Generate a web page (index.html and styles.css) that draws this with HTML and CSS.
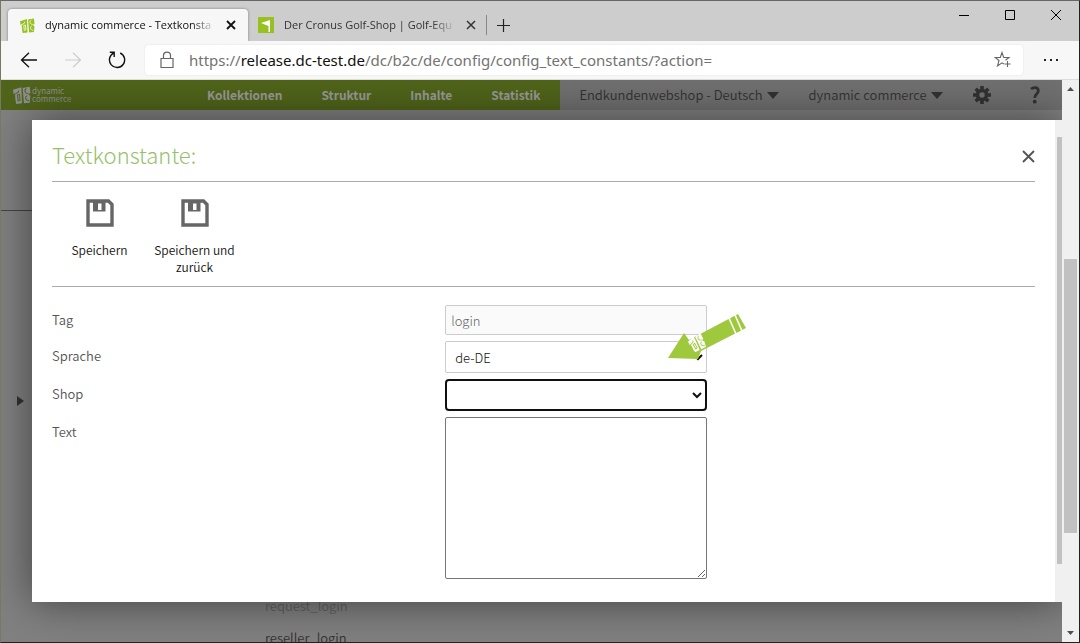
FILE: index.html
```html
<!DOCTYPE html>
<html lang="de">
<head>
<meta charset="utf-8">
<title>dynamic commerce - Textkonstante</title>
<link rel="stylesheet" href="styles.css">
</head>
<body>
<svg class="defs" width="0" height="0" aria-hidden="true">
  <symbol id="dc" viewBox="0 0 28 28">
    <path fill="currentColor" d="M0 6 13 2 14 27 5 28 4 23 3 12 1 13zM15 3 26 1 27 11 24 13 27 16 26 26 17 27z"/>
    <path fill="none" stroke="var(--cut)" stroke-width="1.600" d="M2 13 8 10 9 7M7 14 10 13 11 22 8 23zM21 4C17 6 18 12 24 12M22 15C18 17 19 23 25 23"/>
  </symbol>
  <symbol id="disk" viewBox="0 0 28 28">
    <path fill="none" stroke="#666" stroke-width="3.4" d="M2 2H22.500L26 5.500V26H2z"/>
    <path fill="#666" fill-rule="evenodd" d="M7 2H19.500V12.500H7zM12 4.500V11H15.500V4.500z"/>
  </symbol>
</svg>
<header class="titlebar">
  <div class="tab tab-active">
    <svg class="favicon" width="15" height="15"><use href="#dc"/></svg>
    <span class="tab-title">dynamic commerce - Textkonsta</span>
    <button class="icon-button" aria-label="Tab schließen"><svg width="10" height="10" viewBox="0 0 10 10"><path d="M1 1 9 9M9 1 1 9" stroke="#111" stroke-width="1.800"/></svg></button>
  </div>
  <div class="tab">
    <svg class="favicon" width="16" height="16" viewBox="0 0 16 16"><path fill="#97c11f" d="M0 0H16V16H0z"/><path fill="#fff" d="M3 6 12 3V15H10.500V9z"/></svg>
    <span class="tab-title">Der Cronus Golf-Shop | Golf-Equ</span>
    <button class="icon-button" aria-label="Tab schließen"><svg width="10" height="10" viewBox="0 0 10 10"><path d="M1 1 9 9M9 1 1 9" stroke="#333" stroke-width="1.500"/></svg></button>
  </div>
  <button class="icon-button new-tab" aria-label="Neuer Tab"><svg width="13" height="13" viewBox="0 0 13 13"><path d="M6.500 0V13M0 6.500H13" stroke="#222" stroke-width="1.200"/></svg></button>
  <div class="window-buttons">
    <button class="icon-button" aria-label="Minimieren"><svg width="10" height="10" viewBox="0 0 10 10"><path d="M0 5.500H10" stroke="#000"/></svg></button>
    <button class="icon-button" aria-label="Maximieren"><svg width="10" height="10" viewBox="0 0 10 10"><path d="M.5.5H9.500V9.500H.5z" fill="none" stroke="#000"/></svg></button>
    <button class="icon-button" aria-label="Schließen"><svg width="10" height="10" viewBox="0 0 10 10"><path d="M0 0 10 10M10 0 0 10" stroke="#000"/></svg></button>
  </div>
</header>
<nav class="toolbar">
  <button class="icon-button tool" aria-label="Zurück"><svg width="18" height="16" viewBox="0 0 18 16"><path d="M17 8H1.500M9 .8 1.500 8 9 15.200" fill="none" stroke="#111" stroke-width="1.300"/></svg></button>
  <button class="icon-button tool" aria-label="Vorwärts"><svg width="18" height="16" viewBox="0 0 18 16"><path d="M1 8H16.500M9 .8 16.500 8 9 15.200" fill="none" stroke="#ccc" stroke-width="1.200"/></svg></button>
  <button class="icon-button tool" aria-label="Neu laden"><svg width="18" height="18" viewBox="0 0 18 18"><path d="M12.200 2A7.600 7.600 0 1 1 5.500 2.200M1.800 1.200H6.200V6" fill="none" stroke="#111" stroke-width="1.400"/></svg></button>
  <div class="address">
    <svg width="14" height="18" viewBox="0 0 14 18"><path d="M1 7.500H13V16.500H1zM3.500 7.500V4.500C3.500 0 10.500 0 10.500 4.500V7.500" fill="none" stroke="#666" stroke-width="1.200"/></svg>
    <span class="url">https://<b>release.dc-test.de</b>/dc/b2c/de/config/config_text_constants/?action=</span>
    <button class="icon-button" aria-label="Zu Favoriten hinzufügen"><svg width="18" height="18" viewBox="0 0 18 18"><path d="M10 13 8 11.800 3.500 15 5 9.500 1.200 6.500H6.300L8 1.500 9.700 6.500H15L11.500 9.300M13.500 10V16M10.500 13H16.500" fill="none" stroke="#666" stroke-width="1.100"/></svg></button>
  </div>
  <button class="icon-button more" aria-label="Einstellungen und mehr"><svg width="14" height="4" viewBox="0 0 14 4"><path d="M0 1H2V3H0zM6 1H8V3H6zM12 1H14V3H12z" fill="#222"/></svg></button>
</nav>
<div class="viewport">
  <div class="page">
    <header class="site-header">
      <div class="main-nav">
        <a class="brand" href="#"><svg width="18" height="18"><use href="#dc"/></svg><span class="brand-name"><span>dynamic</span><span>commerce</span></span></a>
        <a href="#">Kollektionen</a><a href="#">Struktur</a><a href="#">Inhalte</a><a href="#">Statistik</a>
      </div>
      <div class="account-nav">
        <button class="menu">Endkundenwebshop - Deutsch <svg width="12" height="7" viewBox="0 0 12 7"><path d="M0 0H12L6 7z" fill="currentColor"/></svg></button>
        <button class="menu">dynamic commerce <svg width="12" height="7" viewBox="0 0 12 7"><path d="M0 0H12L6 7z" fill="currentColor"/></svg></button>
        <button class="menu" aria-label="Einstellungen"><svg width="18" height="18" viewBox="-9 -9 18 18"><g stroke="#323232" stroke-width="3.600"><path d="M0-9V-5M0 5V9M-9 0H-5M5 0H9M-6.300-6.300-4-4M4 4 6.300 6.300M-6.300 6.300-4 4M4-4 6.300-6.300"/><circle r="4.500" fill="none"/></g></svg></button>
        <button class="menu help" aria-label="Hilfe"><svg width="10" height="18" viewBox="0 0 10 18"><path d="M1 3C4 .6 8.300 1.300 8.300 5 8.300 8 4.700 8.300 4.700 12" fill="none" stroke="#323232" stroke-width="2.800"/><circle cx="4.700" cy="15.700" r="1.900" fill="#323232"/></svg></button>
      </div>
    </header>
    <main class="background">
      <aside class="sidebar">
        <div class="sidebar-head"></div>
        <button class="expand" aria-label="Aufklappen"><svg width="7" height="10" viewBox="0 0 7 10"><path d="M0 0 7 5 0 10z" fill="#323232"/></svg></button>
      </aside>
      <ul class="constants"><li class="dim">request_login</li><li>reseller_login</li></ul>
    </main>
    <section class="modal" role="dialog" aria-labelledby="dialog-title">
      <div class="modal-content">
        <div class="modal-head">
          <h1 id="dialog-title">Textkonstante:</h1>
          <button class="icon-button" aria-label="Dialog schließen"><svg width="13" height="13" viewBox="0 0 13 13"><path d="M1 1 12 12M12 1 1 12" stroke="#555" stroke-width="1.900"/></svg></button>
        </div>
        <div class="actions">
          <button class="action"><svg width="28" height="28"><use href="#disk"/></svg><span>Speichern</span></button>
          <button class="action"><svg width="28" height="28"><use href="#disk"/></svg><span>Speichern und zurück</span></button>
        </div>
        <form class="form">
          <label for="tag">Tag</label>
          <div class="field"><input class="control tag" id="tag" type="text" value="login" readonly></div>
          <label for="language">Sprache</label>
          <div class="field">
            <select class="control" id="language"><option>de-DE</option></select>
            <svg class="pointer" width="80" height="48" viewBox="0 0 80 48" aria-hidden="true">
              <path fill="#9fc93c" d="M0 45 16 20 21 27 70 1 78 15 33 38 30 46z"/>
              <path stroke="#fff" stroke-width="1.600" d="M61 5 68 21M67 2 74 18"/>
              <g class="pointer-logo" transform="rotate(-22 29 30)"><use href="#dc" x="21" y="22" width="16" height="16"/></g>
            </svg>
          </div>
          <label for="shop">Shop</label>
          <div class="field"><select class="control focused" id="shop"><option></option></select></div>
          <label for="text">Text</label>
          <div class="field"><textarea class="control text" id="text"></textarea></div>
        </form>
      </div>
      <div class="modal-scroll"><div class="modal-thumb"></div></div>
    </section>
  </div>
  <div class="scrollbar">
    <svg width="7" height="4" viewBox="0 0 7 4"><path d="M0 4H7L3.500 0z" fill="#505050"/></svg>
    <div class="track"><div class="thumb"></div></div>
    <svg width="7" height="4" viewBox="0 0 7 4"><path d="M0 0H7L3.500 4z" fill="#505050"/></svg>
  </div>
</div>
</body>
</html>
```
FILE: styles.css
```css
* { box-sizing: border-box; }
body {
  margin: 0;
  height: 100vh;
  display: flex;
  flex-direction: column;
  overflow: hidden;
  border: 1px solid #222;
  border-top-color: #666;
  border-left-color: #777963;
  font-family: "Noto Sans CJK SC", "Noto Sans", sans-serif;
  background: #f7f7f7;
}
button { font: inherit; color: inherit; background: none; border: 0; padding: 0; }
svg { flex: none; display: block; }
.defs { position: absolute; }
.icon-button { display: flex; align-items: center; justify-content: center; flex: none; }

.titlebar {
  height: 40px;
  flex: none;
  display: flex;
  align-items: flex-end;
  padding-left: 7px;
  background: #cdcdcd;
  font: 11px/16px "Open Sans", sans-serif;
  color: #333;
}
.tab {
  display: flex;
  align-items: center;
  width: 239px;
  height: 32px;
  padding: 0 10px;
  gap: 10px;
  border-right: 1px solid #888;
}
.tab-active {
  width: 240px;
  padding: 0 12px;
  color: #111;
  background: #f7f7f7;
  border: 0;
  border-radius: 4px 4px 0 0;
  box-shadow: 0 0 3px rgba(0, 0, 0, .4);
  clip-path: inset(-4px -4px 0);
}
.tab:not(.tab-active) { height: 20px; margin-bottom: 6px; }
.favicon { color: #97c11f; --cut: #f7f7f7; }
.tab-title {
  flex: 1;
  white-space: nowrap;
  -webkit-mask-image: linear-gradient(to right, #000 86%, transparent);
  mask-image: linear-gradient(to right, #000 86%, transparent);
}
.new-tab { width: 32px; height: 32px; }
.window-buttons { display: flex; margin-left: auto; align-self: flex-start; }
.window-buttons .icon-button { width: 46px; height: 28px; }

.toolbar {
  height: 39px;
  flex: none;
  display: flex;
  align-items: center;
  padding-left: 6px;
  background: #f7f7f7;
  border-bottom: 1px solid #ddd;
}
.tool { width: 44px; height: 30px; }
.address {
  flex: 1;
  min-width: 0;
  height: 30px;
  margin-left: 6px;
  display: flex;
  align-items: center;
  gap: 15px;
  padding: 0 11px 0 15px;
  background: #fff;
  border-radius: 4px;
  box-shadow: 0 0 2px rgba(0, 0, 0, .1);
}
.url {
  flex: 1;
  overflow: hidden;
  white-space: nowrap;
  font: 15px/22px "Noto Sans", "Open Sans", sans-serif;
  color: #737373;
}
.url b { font-weight: 400; color: #111; }
.more { width: 56px; height: 30px; }

.viewport { flex: 1; min-height: 0; display: flex; }
.page {
  flex: 1;
  min-width: 0;
  position: relative;
  display: flex;
  flex-direction: column;
  overflow: hidden;
  background: #818181;
}
.site-header {
  height: 30px;
  flex: none;
  display: flex;
  font-size: 13px;
  font-weight: 350;
  line-height: 18px;
  color: #323232;
  background: #707070;
}
.main-nav {
  display: flex;
  align-items: center;
  gap: 39px;
  padding: 0 20px 0 12px;
  background: #50641a;
  color: #999;
  font-size: 12px;
  font-weight: 700;
}
.main-nav a { color: inherit; text-decoration: none; }
.main-nav .brand {
  display: flex;
  align-items: center;
  gap: 1px;
  width: 155px;
  font-size: 8px;
  line-height: 8px;
  font-weight: 400;
  color: #8f8f8f;
  --cut: #50641a;
}
.brand-name { display: flex; flex-direction: column; }
.account-nav {
  flex: 1;
  display: flex;
  align-items: center;
  gap: 30px;
  padding-left: 19px;
}
.menu { display: flex; align-items: center; gap: 4px; }
.help { margin-left: 9px; }
.background { flex: 1; min-height: 0; display: flex; }
.sidebar { width: 264px; display: flex; flex-direction: column; }
.sidebar-head { height: 101px; border-bottom: 1px solid #444; }
.expand { align-self: flex-start; padding: 185px 16px 0; }
.constants {
  margin: auto 0 -12px;
  padding: 0;
  list-style: none;
  font-size: 13px;
  font-weight: 350;
  line-height: 32px;
  color: #323232;
}
.dim { color: #606060; }

.modal {
  position: absolute;
  top: 40px;
  left: 31px;
  right: 0;
  display: flex;
  background: #fff;
  box-shadow: 0 0 40px rgba(0, 0, 0, .5);
}
.modal-content { flex: 1; min-width: 0; padding: 11px 20px 23px; }
.modal-head {
  display: flex;
  align-items: center;
  justify-content: space-between;
  height: 51px;
  border-bottom: 1px solid #aaa;
}
.modal-head h1 {
  margin: 0;
  padding-bottom: 4px;
  font-size: 22px;
  line-height: 32px;
  font-weight: 300;
  color: #97c06a;
}
.actions {
  display: flex;
  align-items: flex-start;
  height: 105px;
  padding-top: 17px;
  border-bottom: 1px solid #aaa;
}
.action {
  width: 95px;
  display: flex;
  flex-direction: column;
  align-items: center;
  gap: 14px;
  font-size: 12px;
  font-weight: 350;
  line-height: 17px;
  color: #111;
}
.form {
  display: grid;
  grid-template-columns: 2fr 3fr;
  row-gap: 6px;
  padding-top: 18px;
  font-size: 13px;
  font-weight: 350;
  color: #555;
}
.form label { line-height: 30px; height: 30px; }
.field { position: relative; width: 262px; }
.control {
  display: block;
  width: 100%;
  height: 32px;
  margin: 0;
  padding: 0 5px;
  border: 1px solid #ccc;
  border-radius: 2px;
  background: #fff;
  font: 300 13px/18px "Noto Sans CJK SC", sans-serif;
  color: #111;
}
.tag { height: 30px; background: #fafafa; color: #666; }
.focused { border: 2px solid #101010; border-radius: 4px; }
.text { height: 162px; border-color: #767676; }
.pointer { position: absolute; left: 223px; top: -28px; }
.pointer-logo { color: #fff; --cut: #9fc93c; }
.modal-scroll { width: 7px; flex: none; padding: 17px 0 38px 2px; background: #f0f0f0; }
.modal-thumb { height: 100%; background: #c1c1c1; }

.scrollbar {
  width: 17px;
  flex: none;
  display: flex;
  flex-direction: column;
  align-items: center;
  padding: 7px 0;
  background: #f0f0f0;
}
.track { flex: 1; width: 13px; display: flex; flex-direction: column; justify-content: flex-end; padding-bottom: 98px; }
.thumb { height: 62%; background: #c1c1c1; }
```
